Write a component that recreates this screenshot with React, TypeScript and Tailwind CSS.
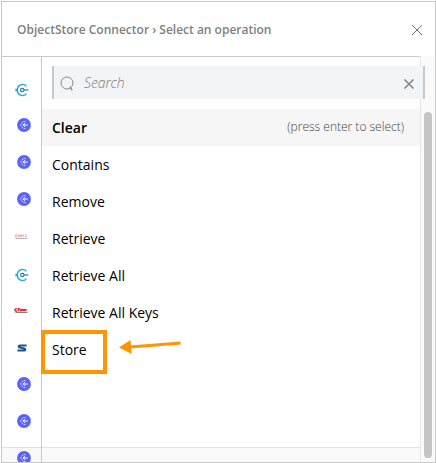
import React from 'react';

type Kind = 'plug' | 'arrow' | 'faded' | 'red' | 's';

const rail: Kind[] = ['plug', 'arrow', 'arrow', 'arrow', 'faded', 'plug', 'red', 's', 'arrow', 'arrow'];
const operations = ['Clear', 'Contains', 'Remove', 'Retrieve', 'Retrieve All', 'Retrieve All Keys', 'Store'];

function PlugIcon() {
  return (
    <svg width="14" height="14" viewBox="0 0 14 14" fill="none" className="mr-[6px] mt-[4px] block">
      <path d="M11.4 3.3A5.1 5.1 0 0 0 2.4 7A5.1 5.1 0 0 0 11.4 10.7" stroke="#22a9dd" strokeWidth="1.3" />
      <path d="M0.4 7H2.8" stroke="#22a9dd" strokeWidth="2.6" />
      <circle cx="7.3" cy="7" r="1.7" stroke="#2b7ea6" strokeWidth="1.2" />
      <path d="M9 7H13.4" stroke="#2b7ea6" strokeWidth="1.2" />
    </svg>
  );
}

function ArrowIcon() {
  return (
    <svg width="14" height="14" viewBox="0 0 14 14" fill="none" className="mr-px block">
      <circle cx="7" cy="7" r="6.9" fill="#5b63f6" />
      <path d="M8.4 3.4L6.4 3.6L3.4 7L6.4 10.4L8.4 10.6" stroke="#d0d2ff" strokeWidth="1" strokeDasharray="1.8 .5" />
      <path d="M5.8 7H10.8M8.2 5.1L6.2 7L8.2 8.9" stroke="#fff" strokeWidth="1" />
    </svg>
  );
}

function WordmarkIcon({ faded }: { faded: boolean }) {
  return (
    <svg width="14" height="6" viewBox="0 0 14 6" fill="none" className={faded ? 'mr-[7px] mt-[2px] block opacity-80' : 'mr-[7px] mt-[2px] block'}>
      <path d={faded ? 'M3 .8H1.7L.9 2L1.7 2.8H3M4 2.8V1H5.3V2.8M6.4 2.8V1H7.7V2.8M8.8 2.8V1H10M11 1H12.8M11 2.6H12.8' : 'M3.4 .9H1.5L.6 1.9L1.5 3.1H3.4M4.5 .2V3.2M4.5 .6H6.3M6.3 1.6V3.2M7.5 3.2V1.6H9V3.2M10.3 3.2V1.6H12V3.2'} stroke={faded ? '#e8757a' : '#dc2026'} strokeWidth={faded ? '.8' : '1.2'} />
      <path d="M1.5 4.5H13.5" stroke={faded ? '#888' : '#927b7e'} strokeWidth="1" strokeDasharray={faded ? '1.8 .5' : undefined} />
    </svg>
  );
}

function SIcon() {
  return (
    <svg width="10" height="8" viewBox="0 0 10 8" fill="none" className="mr-[6px] mt-[2px] block">
      <path d="M9.6 1.4H3C1.2 1.4 1.2 3.1 2.8 3.5L7.2 4.4C8.8 4.8 8.7 6.6 7 6.6H.4" stroke="#1c5595" strokeWidth="2" />
    </svg>
  );
}

function RailIcon({ kind }: { kind: Kind }) {
  if (kind === 'plug') return <PlugIcon />;
  if (kind === 'arrow') return <ArrowIcon />;
  if (kind === 's') return <SIcon />;
  return <WordmarkIcon faded={kind === 'faded'} />;
}

export default function App() {
  return (
    <main className="h-[463px] w-[436px] overflow-hidden bg-white pl-px pt-px font-['Open_Sans',sans-serif]">
      <section className="flex h-[462px] w-[435px] flex-col overflow-hidden border border-[#c9c9c9]">
        <header className="flex h-[54px] shrink-0 items-center justify-between pl-[15px] pr-[12px]">
          <h1 className="whitespace-nowrap pt-[2px] text-[12px] font-semibold leading-4 text-[#7f7f7f]">ObjectStore Connector › Select an operation</h1>
          <button aria-label="Close" className="pt-[2px]">
            <svg width="12" height="12" viewBox="0 0 12 12" className="block"><path d="M1 1L11 11M11 1L1 11" stroke="#707070" strokeWidth="1" /></svg>
          </button>
        </header>
        <div className="flex min-h-0 flex-1">
          <aside className="flex w-[40px] shrink-0 flex-col overflow-hidden border-r border-t border-[#cacaca] pt-[12px]">
            {rail.map((kind, i) => (
              <div key={i} className="flex h-[37px] shrink-0 items-center justify-center pl-[6px]">
                <RailIcon kind={kind} />
              </div>
            ))}
            <div className="mt-auto flex h-[15px] shrink-0 items-start justify-center overflow-hidden border-t border-[#e2e2e2] bg-[#f9f9f9] pl-[6px] pt-[3px]">
              <div className="shrink-0"><ArrowIcon /></div>
            </div>
          </aside>
          <div className="flex min-w-0 flex-1 flex-col border-t border-[#cacaca]">
            <div className="relative z-10 ml-[10px] mr-[-5px] mt-[9px] flex h-[33px] shrink-0 items-center border-l-2 border-r-2 border-[#c8c9cb] bg-[#f3f4f7] pl-[6px] pr-[8px]">
              <svg width="15" height="16" viewBox="0 0 15 16" fill="none" className="mt-[2px] block"><circle cx="7" cy="7" r="6" stroke="#8a8a8a" /><path d="M9.8 10.8L12.2 14.3" stroke="#8a8a8a" strokeWidth="1.5" /></svg>
              <input aria-label="Search" placeholder="Search" className="ml-[9px] min-w-0 flex-1 bg-transparent text-[14px] font-light italic leading-5 tracking-[-0.1px] outline-none placeholder:text-[#7d7d7d]" />
              <svg width="12" height="12" viewBox="0 0 12 12" className="mt-[2px] block"><path d="M1.5 1.5L10.5 10.5M10.5 1.5L1.5 10.5" stroke="#858585" strokeWidth="1.6" /></svg>
            </div>
            <ul className="mt-[10px]">
              {operations.map((name, i) => (
                <li key={name} className={i === 0 ? 'flex h-[37px] items-center justify-between bg-[#f6f6f6] pl-[10px] pr-[16px] text-[14px] font-semibold text-black' : 'relative flex h-[37px] items-center pl-[10px] text-[14px] text-black'}>
                  <span>{name}</span>
                  {i === 0 && <span className="-mt-[2px] text-[12px] font-light text-[#444]">(press enter to select)</span>}
                  {name === 'Store' && (
                    <>
                      <span className="absolute left-[-1px] top-[-1px] h-[44px] w-[66px] border-4 border-[#ff9500]" />
                      <svg width="64" height="18" viewBox="0 0 64 18" className="absolute left-[76px] top-[7px]"><path d="M1 9.5L12.5 2L13.7 16Z" fill="#ff9500" /><path d="M12 9L62.5 5" stroke="#ff9500" strokeWidth="3" /></svg>
                    </>
                  )}
                </li>
              ))}
            </ul>
            <div className="mt-auto h-[15px] border-t border-[#e5e5e5] bg-[#fafafa]" />
          </div>
          <div className="flex w-[15px] shrink-0 border-l border-[#e6e6e6] bg-[#fafafa] pl-[3px]">
            <div className="mt-[56px] h-[346px] w-[8px] rounded-full bg-[#c5c5c5]" />
          </div>
        </div>
      </section>
    </main>
  );
}
